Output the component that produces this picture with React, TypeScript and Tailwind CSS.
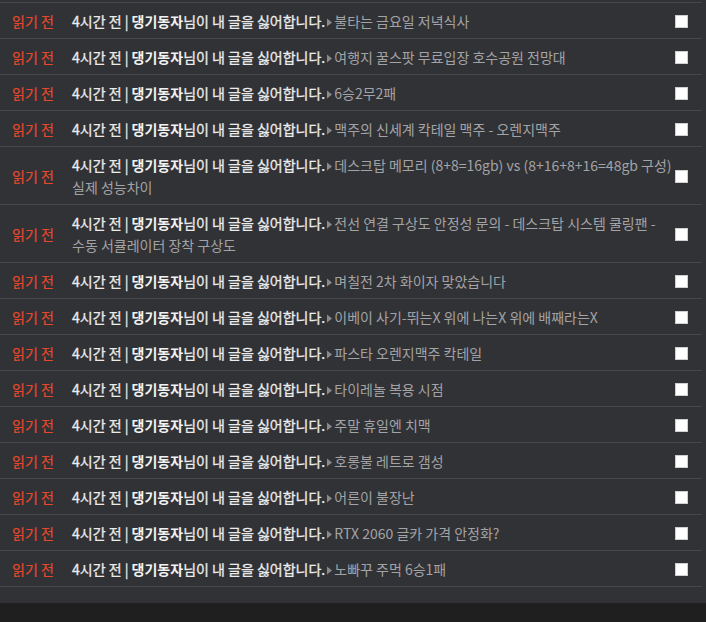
import React from "react";

const items: string[] = [
  "불타는 금요일 저녁식사",
  "여행지 꿀스팟 무료입장 호수공원 전망대",
  "6승2무2패",
  "맥주의 신세계 칵테일 맥주 - 오렌지맥주",
  "데스크탑 메모리 (8+8=16gb) vs (8+16+8+16=48gb 구성) 실제 성능차이",
  "전선 연결 구상도 안정성 문의 - 데스크탑 시스템 쿨링팬 - 수동 서큘레이터 장착 구상도",
  "며칠전 2차 화이자 맞았습니다",
  "이베이 사기-뛰는X 위에 나는X 위에 배째라는X",
  "파스타 오렌지맥주 칵테일",
  "타이레놀 복용 시점",
  "주말 휴일엔 치맥",
  "호롱불 레트로 갬성",
  "어른이 불장난",
  "RTX 2060 글카 가격 안정화?",
  "노빠꾸 주먹 6승1패",
];

function Row({ title, last }: { title: string; last: boolean }) {
  return (
    <div
      className={`flex items-center border-t border-[#46474b] ${last ? "border-b" : ""} pt-[7px] pb-[6px]`}
    >
      <div className="w-[72px] shrink-0 pl-[12px] text-[14px] leading-[22px] text-[#e8472c] [-webkit-text-stroke:0.2px_#e8472c]">
        읽기 전
      </div>
      <div className="w-[607px] shrink-0 break-keep text-[14px] leading-[22px] text-[#a3a3a5]">
        <span className="text-[#ececec] [-webkit-text-stroke:0.3px_#ececec]">4시간 전 | </span>
        <span className="font-bold text-[#f2f2f2]">댕기동자</span>
        <span className="text-[#ececec] [-webkit-text-stroke:0.3px_#ececec]">님이 내 글을 싫어합니다.</span>
        <svg
          width="7"
          height="9"
          viewBox="0 0 7 9"
          className="mx-[1px] inline-block align-[0px]"
        >
          <path d="M1 0.5 L6 4.5 L1 8.5 Z" fill="#8a8a8c" />
        </svg>
        <span>{title}</span>
      </div>
      <div className="ml-[-4px] flex w-[18px] shrink-0">
        <div className="h-[13px] w-[13px] border border-[#cfcfcf] bg-white" />
      </div>
    </div>
  );
}

export default function App() {
  return (
    <div
      className="h-[622px] w-[706px] bg-[#1f1f20]"
      style={{ fontFamily: '"Noto Sans CJK KR", "Noto Sans", sans-serif' }}
    >
      <div className="bg-[#313236] pt-[2px] pb-[16px]">
        <div className="mr-[4px]">
          {items.map((t, i) => (
            <Row key={i} title={t} last={i === items.length - 1} />
          ))}
        </div>
      </div>
    </div>
  );
}
